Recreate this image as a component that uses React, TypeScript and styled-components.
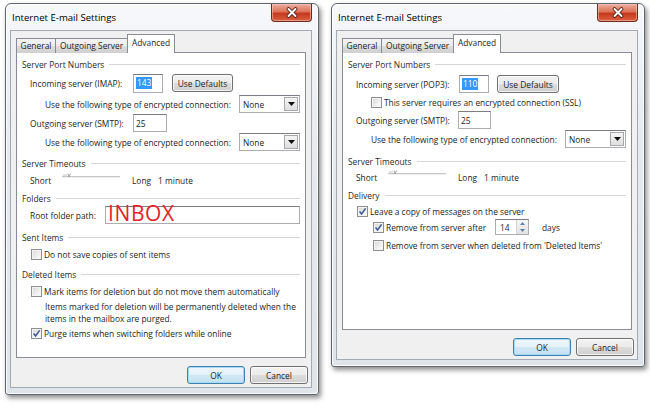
import React from 'react';
import styled, { createGlobalStyle, css } from 'styled-components';

const GlobalStyle = createGlobalStyle`
  html, body {
    margin: 0;
    padding: 0;
    background: #ffffff;
  }
  body {
    font-family: "Open Sans", "Noto Sans", sans-serif;
    font-size: 8.4px;
    color: #1e1e1e;
  }
`;

const Page = styled.div`
  display: flex;
  align-items: flex-start;
  gap: 12px;
  padding: 3px 0 0 5px;
  width: 650px;
  height: 407px;
  box-sizing: border-box;
  overflow: hidden;
`;

const Window = styled.div`
  width: 314px;
  box-sizing: border-box;
  padding: 0 6px 6px 4px;
  border: 1px solid #5f656d;
  border-radius: 6px 6px 3px 3px;
  background: linear-gradient(180deg, #f6f8fa 0%, #e7ebf0 35%, #dfe4ea 100%);
  box-shadow: 2px 3px 5px rgba(0, 0, 0, 0.45), inset 0 0 0 1px rgba(255, 255, 255, 0.85);
`;

const TitleBar = styled.div`
  height: 26px;
  display: flex;
  align-items: flex-start;
`;

const Title = styled.span`
  font-size: 9.6px;
  line-height: 27px;
  padding-left: 2px;
  color: #000;
`;

const CloseButton = styled.div`
  margin-left: auto;
  width: 41px;
  height: 18px;
  box-sizing: border-box;
  border: 1px solid #6e2a20;
  border-top: none;
  border-radius: 0 0 4px 4px;
  background: linear-gradient(180deg, #eab0a2 0%, #dc7259 45%, #c53a1f 55%, #d8603f 100%);
  box-shadow: inset 0 0 0 1px rgba(255, 210, 200, 0.5);
  display: flex;
  align-items: center;
  justify-content: center;
`;

const Client = styled.div`
  border: 1px solid #a3aab3;
  background: #f0f0f0;
  padding: 4px 5px 3px 5px;
`;

const TabStrip = styled.div`
  height: 18px;
  display: flex;
  align-items: flex-end;
  position: relative;
  z-index: 1;
  margin-bottom: -1px;
`;

const Tab = styled.div<{ $active?: boolean; $w: number }>`
  width: ${p => p.$w}px;
  height: 15px;
  box-sizing: border-box;
  margin-right: -1px;
  border: 1px solid #898c95;
  border-bottom: none;
  background: linear-gradient(180deg, #f3f3f3 0%, #ebebeb 50%, #dddddd 51%, #cfcfcf 100%);
  display: flex;
  align-items: center;
  justify-content: center;
  padding-bottom: 1px;
  color: #1e1e1e;
  ${p =>
    p.$active &&
    css`
      height: 19px;
      background: #ffffff;
      padding-bottom: 3px;
    `}
`;

const Panel = styled.div<{ $h: number }>`
  height: ${p => p.$h}px;
  box-sizing: border-box;
  background: #ffffff;
  border: 1px solid #898c95;
  padding: 3px 5px 0 5px;
  display: flex;
  flex-direction: column;
`;

const GroupHeader = styled.div<{ $mt?: number }>`
  height: 16px;
  display: flex;
  align-items: center;
  gap: 5px;
  margin-top: ${p => p.$mt ?? 0}px;
  color: #2a2a2a;
  &::after {
    content: '';
    flex: 1;
    height: 1px;
    background: #d3d7dc;
  }
`;

const Row = styled.div<{ $mt?: number; $indent?: number }>`
  height: 16px;
  display: flex;
  align-items: center;
  margin-top: ${p => p.$mt ?? 0}px;
  padding-left: ${p => p.$indent ?? 8}px;
  white-space: nowrap;
`;

const Label = styled.span<{ $w?: number }>`
  flex: none;
  width: ${p => (p.$w ? `${p.$w}px` : 'auto')};
`;

const Note = styled.div<{ $mt?: number }>`
  margin-top: ${p => p.$mt ?? 0}px;
  padding-left: 23px;
  line-height: 12px;
  height: 24px;
`;

const TextBox = styled.div<{ $w?: number; $h?: number; $ml?: number }>`
  flex: ${p => (p.$w ? 'none' : '1')};
  width: ${p => (p.$w ? `${p.$w}px` : 'auto')};
  height: ${p => p.$h ?? 19}px;
  margin-left: ${p => p.$ml ?? 0}px;
  box-sizing: border-box;
  border: 1px solid #abadb3;
  border-top-color: #7a7d84;
  background: #ffffff;
  display: flex;
  align-items: center;
  padding-left: 2px;
  overflow: visible;
`;

const Selected = styled.span`
  background: #3399ff;
  color: #ffffff;
  padding: 0 1px;
  line-height: 12px;
`;

const BigRed = styled.span`
  font-size: 21px;
  line-height: 14px;
  letter-spacing: 0.6px;
  color: #e2232c;
  margin-top: -4px;
`;

const PushButton = styled.div<{ $w: number; $ml?: number; $default?: boolean }>`
  flex: none;
  width: ${p => p.$w}px;
  height: 18px;
  margin-left: ${p => p.$ml ?? 0}px;
  box-sizing: border-box;
  border: 1px solid #707070;
  border-radius: 3px;
  background: linear-gradient(180deg, #f2f2f2 0%, #ebebeb 50%, #dddddd 51%, #cfcfcf 100%);
  box-shadow: inset 0 0 0 1px rgba(255, 255, 255, 0.75);
  display: flex;
  align-items: center;
  justify-content: center;
  color: #1e1e1e;
  ${p =>
    p.$default &&
    css`
      border-color: #3c7fb1;
      box-shadow: inset 0 0 0 1px #a6dcf3;
      background: linear-gradient(180deg, #eef7fc 0%, #e4f1f9 50%, #d3e8f5 51%, #c4e0f2 100%);
    `}
`;

const Combo = styled.div`
  margin-left: auto;
  flex: none;
  width: 61px;
  height: 18px;
  box-sizing: border-box;
  border: 1px solid #abadb3;
  border-top-color: #7a7d84;
  background: #ffffff;
  display: flex;
  align-items: center;
  padding-left: 3px;
`;

const ComboArrow = styled.div`
  margin-left: auto;
  margin-right: 1px;
  width: 14px;
  height: 14px;
  box-sizing: border-box;
  border: 1px solid #a7a7a7;
  background: linear-gradient(180deg, #f5f5f5, #dedede);
  display: flex;
  align-items: center;
  justify-content: center;
`;

const Box = styled.span<{ $checked?: boolean }>`
  flex: none;
  width: 11px;
  height: 11px;
  box-sizing: border-box;
  border: 1px solid #8e8f8f;
  background: linear-gradient(135deg, #d6d6d6 0%, #f4f4f4 70%, #ffffff 100%);
  box-shadow: inset 0 0 0 1px #f4f4f4;
  margin-right: 2px;
  display: flex;
  align-items: center;
  justify-content: center;
`;

const Spinner = styled.div`
  flex: none;
  width: 34px;
  height: 16px;
  box-sizing: border-box;
  border: 1px solid #abadb3;
  border-top-color: #7a7d84;
  background: #ffffff;
  display: flex;
  align-items: center;
  padding-left: 4px;
`;

const SpinButtons = styled.div`
  margin-left: auto;
  width: 11px;
  height: 14px;
  display: flex;
  flex-direction: column;
  border-left: 1px solid #d4d4d4;
  background: linear-gradient(180deg, #f6f6f6, #e2e2e2);
`;

const SpinHalf = styled.div`
  flex: 1;
  display: flex;
  align-items: center;
  justify-content: center;
`;

const Footer = styled.div`
  display: flex;
  justify-content: flex-end;
  gap: 5px;
  padding-top: 8px;
  margin-right: -2px;
`;

const CloseGlyph = () => (
  <svg width="14" height="11" viewBox="0 0 14 11">
    <path d="M3.5 2 L10.5 9 M10.5 2 L3.5 9" stroke="#4b1610" strokeWidth="3.6" strokeLinecap="round" />
    <path d="M3.5 2 L10.5 9 M10.5 2 L3.5 9" stroke="#ffffff" strokeWidth="2" strokeLinecap="round" />
  </svg>
);

const DownTri = () => (
  <svg width="7" height="4" viewBox="0 0 7 4">
    <path d="M0 0 H7 L3.5 4 Z" fill="#111" />
  </svg>
);

const Check = ({ checked }: { checked?: boolean }) => (
  <Box>
    {checked && (
      <svg width="9" height="9" viewBox="0 0 9 9">
        <path d="M1.6 4.6 L3.6 7 L7.6 1.4" fill="none" stroke="#3f5a92" strokeWidth="1.6" />
      </svg>
    )}
  </Box>
);

const Slider = () => (
  <svg width="58" height="10" viewBox="0 0 58 10" style={{ flex: 'none', marginTop: -6 }}>
    <rect x="0" y="4" width="58" height="1" fill="#c7c7c7" />
    <rect x="0" y="5" width="58" height="1" fill="#eeeeee" />
    <path d="M2 2 V4 M4 2 V4" stroke="#b5b5b5" strokeWidth="0.8" />
    <path d="M6 1.5 L7 5 L8.5 1.5" fill="none" stroke="#9a9a9a" strokeWidth="0.9" />
  </svg>
);

const SpinArrow = ({ up }: { up?: boolean }) => (
  <svg width="5" height="3" viewBox="0 0 5 3">
    <path d={up ? 'M0 3 H5 L2.5 0 Z' : 'M0 0 H5 L2.5 3 Z'} fill="#5b7fae" />
  </svg>
);

const TimeoutRow = ({ mt }: { mt: number }) => (
  <Row $mt={mt}>
    <Label $w={32}>Short</Label>
    <Slider />
    <Label style={{ marginLeft: 12 }}>Long</Label>
    <Label style={{ marginLeft: 7 }}>1 minute</Label>
  </Row>
);

const EncRow = ({ mt }: { mt: number }) => (
  <Row $mt={mt} $indent={23}>
    <Label>Use the following type of encrypted connection:</Label>
    <Combo>
      None
      <ComboArrow>
        <DownTri />
      </ComboArrow>
    </Combo>
  </Row>
);

const Dialog = ({ panelHeight, children }: { panelHeight: number; children: React.ReactNode }) => (
  <Window>
    <TitleBar>
      <Title>Internet E-mail Settings</Title>
      <CloseButton>
        <CloseGlyph />
      </CloseButton>
    </TitleBar>
    <Client>
      <TabStrip>
        <Tab $w={40}>General</Tab>
        <Tab $w={73}>Outgoing Server</Tab>
        <Tab $w={48} $active>
          Advanced
        </Tab>
      </TabStrip>
      <Panel $h={panelHeight}>{children}</Panel>
      <Footer>
        <PushButton $w={58} $default>
          OK
        </PushButton>
        <PushButton $w={58}>Cancel</PushButton>
      </Footer>
    </Client>
  </Window>
);

export default function App() {
  return (
    <>
      <GlobalStyle />
      <Page>
        <Dialog panelHeight={306}>
          <GroupHeader>Server Port Numbers</GroupHeader>
          <Row $mt={3}>
            <Label $w={103}>Incoming server (IMAP):</Label>
            <TextBox $w={30}>
              <Selected>143</Selected>
            </TextBox>
            <PushButton $w={61} $ml={9}>
              Use Defaults
            </PushButton>
          </Row>
          <EncRow mt={5} />
          <Row $mt={3}>
            <Label $w={103}>Outgoing server (SMTP):</Label>
            <TextBox $w={34} $h={18}>
              25
            </TextBox>
          </Row>
          <EncRow mt={3} />
          <GroupHeader $mt={5}>Server Timeouts</GroupHeader>
          <TimeoutRow mt={1} />
          <GroupHeader $mt={2}>Folders</GroupHeader>
          <Row $mt={1}>
            <Label $w={75}>Root folder path:</Label>
            <TextBox $h={18}>
              <BigRed>INBOX</BigRed>
            </TextBox>
          </Row>
          <GroupHeader $mt={6}>Sent Items</GroupHeader>
          <Row $mt={1} $indent={9}>
            <Check />
            Do not save copies of sent items
          </Row>
          <GroupHeader $mt={4}>Deleted Items</GroupHeader>
          <Row $mt={1} $indent={9}>
            <Check />
            Mark items for deletion but do not move them automatically
          </Row>
          <Note $mt={2}>
            Items marked for deletion will be permanently deleted when the
            <br />
            items in the mailbox are purged.
          </Note>
          <Row $indent={9}>
            <Check checked />
            Purge items when switching folders while online
          </Row>
        </Dialog>

        <Dialog panelHeight={278}>
          <GroupHeader>Server Port Numbers</GroupHeader>
          <Row $mt={4}>
            <Label $w={103}>Incoming server (POP3):</Label>
            <TextBox $w={30} $h={18}>
              <Selected>110</Selected>
            </TextBox>
            <PushButton $w={62} $ml={8}>
              Use Defaults
            </PushButton>
          </Row>
          <Row $mt={2} $indent={23}>
            <Check />
            This server requires an encrypted connection (SSL)
          </Row>
          <Row $mt={2}>
            <Label $w={102}>Outgoing server (SMTP):</Label>
            <TextBox $w={33} $h={18}>
              25
            </TextBox>
          </Row>
          <EncRow mt={3} />
          <GroupHeader $mt={6}>Server Timeouts</GroupHeader>
          <TimeoutRow mt={0} />
          <GroupHeader $mt={2}>Delivery</GroupHeader>
          <Row $indent={9}>
            <Check checked />
            Leave a copy of messages on the server
          </Row>
          <Row $indent={25}>
            <Check checked />
            <Label $w={109}>Remove from server after</Label>
            <Spinner>
              14
              <SpinButtons>
                <SpinHalf>
                  <SpinArrow up />
                </SpinHalf>
                <SpinHalf>
                  <SpinArrow />
                </SpinHalf>
              </SpinButtons>
            </Spinner>
            <Label style={{ marginLeft: 13 }}>days</Label>
          </Row>
          <Row $mt={2} $indent={25}>
            <Check />
            Remove from server when deleted from 'Deleted Items'
          </Row>
        </Dialog>
      </Page>
    </>
  );
}
